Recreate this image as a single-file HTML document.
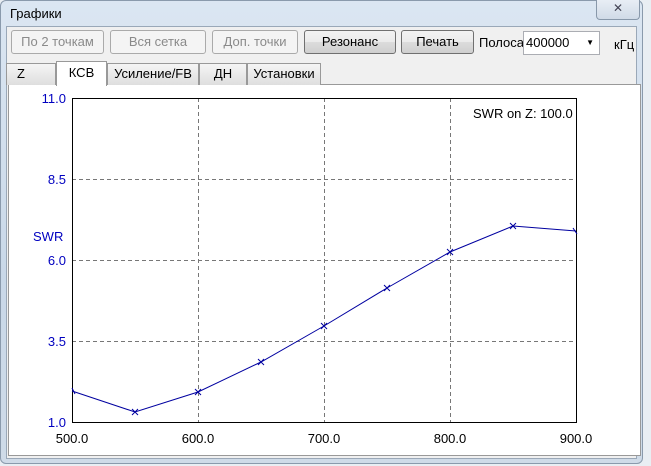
<!DOCTYPE html>
<html><head><meta charset="utf-8"><style>
body{margin:0;width:651px;height:466px;overflow:hidden;background:#e9eef3;font-family:"Liberation Sans",sans-serif;position:relative}
.win{position:absolute;left:0;top:0;width:643px;height:464px;background:linear-gradient(#dbe6f2,#c9d8e8 60%,#cfdbe8);border:1px solid #8a9aac;border-radius:6px;box-sizing:border-box}
.client{position:absolute;left:6px;top:26px;width:629px;height:431px;background:#f0f0f0;border:1px solid #9aa8b8}
.t{position:absolute;font-size:13px;color:#000;white-space:nowrap}
.btn{position:absolute;top:30px;height:24px;box-sizing:border-box;border:1px solid #aaa;border-radius:3px;font-size:13px;text-align:center;line-height:22px;background:#f4f4f4;color:#8a8a8a}
.btn.on{border-color:#707070;background:linear-gradient(#f2f2f2,#ebebeb 50%,#dcdcdc 51%,#cfcfcf);color:#000}
.tab{position:absolute;top:63px;height:22px;box-sizing:border-box;border:1px solid #999;border-bottom:none;background:linear-gradient(#f5f5f5,#dedede);font-size:13px;text-align:center;line-height:20px}
.panel{position:absolute;left:8px;top:84px;width:633px;height:372px;background:#fff;border:1px solid #999;box-sizing:border-box}
</style></head><body>
<div class="win"></div>
<div class="t" style="left:10px;top:6px">Графики</div>
<div style="position:absolute;left:596px;top:0;width:42px;height:19px;border:1px solid #8898aa;border-top:none;border-radius:0 0 4px 4px;background:linear-gradient(#e8eef5,#d0dbe7);text-align:center;font-size:12px;color:#445;line-height:16px">✕</div>
<div class="client"></div>
<div class="btn" style="left:11px;width:93px">По 2 точкам</div>
<div class="btn" style="left:110px;width:96px">Вся сетка</div>
<div class="btn" style="left:212px;width:86px">Доп. точки</div>
<div class="btn on" style="left:304px;width:92px">Резонанс</div>
<div class="btn on" style="left:401px;width:73px">Печать</div>
<div class="t" style="left:479px;top:35px">Полоса</div>
<div style="position:absolute;left:523px;top:31px;width:77px;height:24px;box-sizing:border-box;border:1px solid #abadb3;background:#fff;font-size:13px;line-height:22px;padding-left:2px">400000<span style="position:absolute;right:5px;top:0;font-size:8px">▼</span></div>
<div class="t" style="left:614px;top:37px">кГц</div>
<div class="panel"></div>
<div class="tab" style="left:6px;width:50px;text-align:left;padding-left:10px">Z</div>
<div class="tab" style="left:107px;width:92px">Усиление/FB</div>
<div class="tab" style="left:199px;width:48px">ДН</div>
<div class="tab" style="left:247px;width:74px">Установки</div>
<div class="tab" style="left:56px;top:61px;width:51px;height:25px;background:#fff;line-height:22px">КСВ</div>
<svg style="position:absolute;left:0;top:0" width="651" height="466" font-family="Liberation Sans" font-size="13">
<g stroke="#777" stroke-dasharray="4,3" stroke-width="1">
<line x1="198.5" y1="98" x2="198.5" y2="422"/><line x1="324.5" y1="98" x2="324.5" y2="422"/><line x1="450.5" y1="98" x2="450.5" y2="422"/>
<line x1="72" y1="179.5" x2="576" y2="179.5"/><line x1="72" y1="260.5" x2="576" y2="260.5"/><line x1="72" y1="341.5" x2="576" y2="341.5"/>
</g>
<rect x="72.5" y="98.5" width="504" height="324" fill="none" stroke="#000"/>
<polyline fill="none" stroke="#0000a0" points="72,391 135,412 198,392 261,362 324,326 387,288 450,252 513,226 576,231"/>
<g stroke="#0000a0">
<path d="M132,409l6,6M138,409l-6,6M195,389l6,6M201,389l-6,6M258,359l6,6M264,359l-6,6M321,323l6,6M327,323l-6,6M384,285l6,6M390,285l-6,6M447,249l6,6M453,249l-6,6M510,223l6,6M516,223l-6,6M573,228l4,6M72,388l3,6"/>
</g>
<g fill="#0000c0" text-anchor="end">
<text x="66" y="103">11.0</text><text x="66" y="184">8.5</text><text x="66" y="265">6.0</text><text x="66" y="346">3.5</text><text x="66" y="427">1.0</text>
</g>
<text x="33" y="241" fill="#0000c0">SWR</text>
<text x="473" y="118">SWR on Z: 100.0</text>
<g text-anchor="middle">
<text x="72" y="443">500.0</text><text x="198" y="443">600.0</text><text x="324" y="443">700.0</text><text x="450" y="443">800.0</text><text x="576" y="443">900.0</text>
</g>
</svg>
</body></html>
